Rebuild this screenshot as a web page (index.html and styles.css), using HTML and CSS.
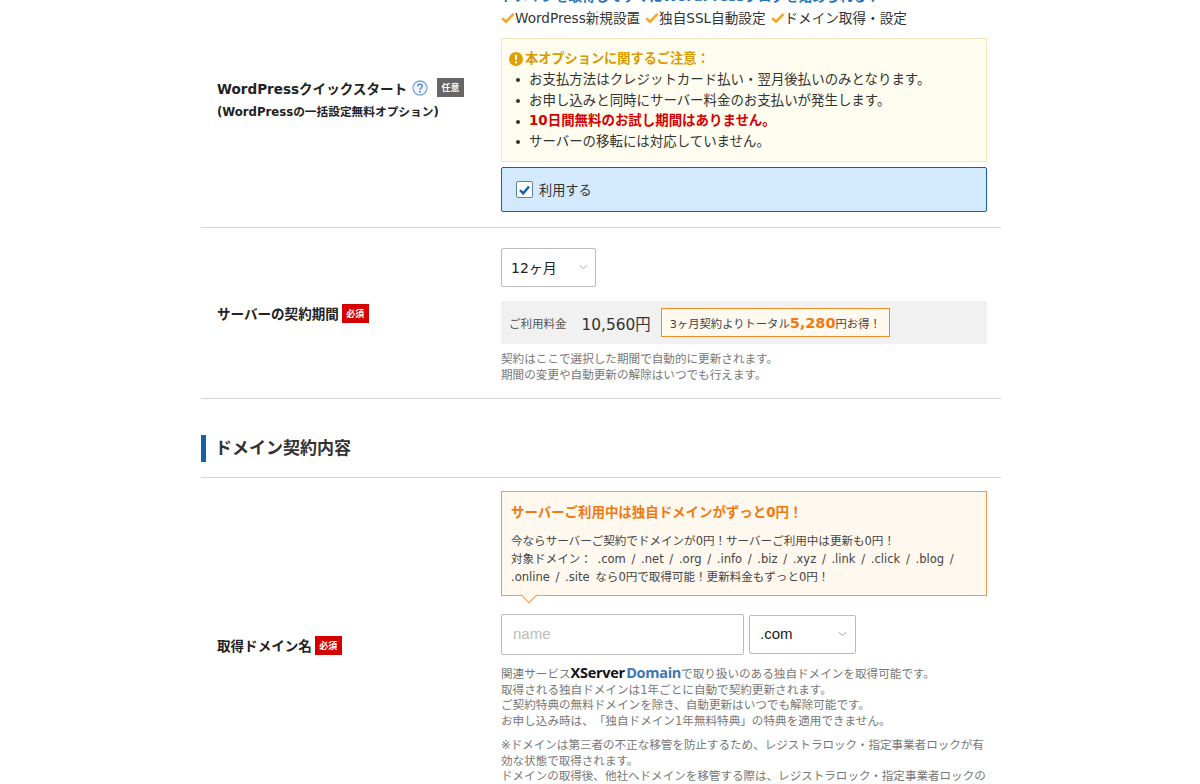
FILE: index.html
```html
<!DOCTYPE html>
<html lang="ja">
<head>
<meta charset="utf-8">
<title>お申し込み</title>
<link rel="stylesheet" href="styles.css">
</head>
<body>
<main class="form">
  <section class="row row-wp">
    <div class="label">
      <div class="label-line">
        <span>WordPressクイックスタート</span>
        <svg class="help" viewBox="0 0 16 16" width="16" height="16"><circle cx="8" cy="8" r="7" fill="#eef4fb" stroke="#7fa6d3" stroke-width="1.3"/><path d="M5.7 6.2C5.8 4.9 6.8 4.2 8 4.2c1.3 0 2.3.8 2.3 1.9 0 1.9-2.3 1.8-2.3 3.6" fill="none" stroke="#4f86c6" stroke-width="1.4"/><circle cx="8" cy="11.8" r=".95" fill="#4f86c6"/></svg>
        <span class="badge badge-opt">任意</span>
      </div>
      <div class="label-sub">(WordPressの一括設定無料オプション)</div>
    </div>
    <div class="content">
      <p class="lead">ドメインを取得してすぐにWordPressブログを始められる！</p>
      <ul class="checks">
        <li><svg class="tick" viewBox="0 0 14 12" width="14" height="12"><path d="M1.2 6.2 5 9.6 12.6 1.8" fill="none" stroke="#f5a623" stroke-width="2.6"/></svg>WordPress新規設置</li>
        <li><svg class="tick" viewBox="0 0 14 12" width="14" height="12"><path d="M1.2 6.2 5 9.6 12.6 1.8" fill="none" stroke="#f5a623" stroke-width="2.6"/></svg>独自SSL自動設定</li>
        <li><svg class="tick" viewBox="0 0 14 12" width="14" height="12"><path d="M1.2 6.2 5 9.6 12.6 1.8" fill="none" stroke="#f5a623" stroke-width="2.6"/></svg>ドメイン取得・設定</li>
      </ul>
      <div class="notice">
        <h4 class="notice-title"><svg viewBox="0 0 14 14" width="14" height="14"><circle cx="7" cy="7" r="7" fill="#e0a100"/><path d="M7 2.8v5" stroke="#fff" stroke-width="2"/><circle cx="7" cy="10.4" r="1.15" fill="#fff"/></svg>本オプションに関するご注意：</h4>
        <ul class="notice-list">
          <li>お支払方法はクレジットカード払い・翌月後払いのみとなります。</li>
          <li>お申し込みと同時にサーバー料金のお支払いが発生します。</li>
          <li class="alert">10日間無料のお試し期間はありません。</li>
          <li>サーバーの移転には対応していません。</li>
        </ul>
      </div>
      <label class="use">
        <span class="checkbox"><svg viewBox="0 0 16 16" width="16" height="16"><path d="M3.2 8.2 6.6 11.6 12.8 4.2" fill="none" stroke="#1560b0" stroke-width="2.6"/></svg></span>
        利用する
      </label>
    </div>
  </section>

  <section class="row row-term">
    <div class="label">
      <div class="label-line"><span>サーバーの契約期間</span><span class="badge badge-req">必須</span></div>
    </div>
    <div class="content">
      <div class="select select-term"><span>12ヶ月</span><svg class="chev" viewBox="0 0 10 6" width="9" height="6"><path d="M1 1l4 4 4-4" fill="none" stroke="#999" stroke-width="1"/></svg></div>
      <div class="price">
        <span class="price-label">ご利用料金</span>
        <span class="price-value">10,560円</span>
        <span class="save">3ヶ月契約よりトータル<b>5,280</b>円お得！</span>
      </div>
      <p class="note">契約はここで選択した期間で自動的に更新されます。<br>期間の変更や自動更新の解除はいつでも行えます。</p>
    </div>
  </section>

  <h2 class="section-title"><span>ドメイン契約内容</span></h2>

  <section class="row row-domain">
    <div class="label">
      <div class="label-line"><span>取得ドメイン名</span><span class="badge badge-req">必須</span></div>
    </div>
    <div class="content">
      <div class="bubble">
        <h4 class="bubble-title">サーバーご利用中は独自ドメインがずっと0円！</h4>
        <p class="bubble-text">今ならサーバーご契約でドメインが0円！サーバーご利用中は更新も0円！<br>対象ドメイン： .com / .net / .org / .info / .biz / .xyz / .link / .click / .blog /<br>.online / .site なら0円で取得可能！更新料金もずっと0円！</p>
      </div>
      <div class="domain-inputs">
        <input class="name-input" type="text" placeholder="name">
        <div class="select select-tld"><span>.com</span><svg class="chev" viewBox="0 0 10 6" width="9" height="6"><path d="M1 1l4 4 4-4" fill="none" stroke="#999" stroke-width="1"/></svg></div>
      </div>
      <p class="note">関連サービス<span class="logo"><span class="logo-x">XServer</span> <span class="logo-d">Domain</span></span>で取り扱いのある独自ドメインを取得可能です。<br>取得される独自ドメインは1年ごとに自動で契約更新されます。<br>ご契約特典の無料ドメインを除き、自動更新はいつでも解除可能です。<br>お申し込み時は、「独自ドメイン1年無料特典」の特典を適用できません。</p>
      <p class="note note-gap">※ドメインは第三者の不正な移管を防止するため、レジストラロック・指定事業者ロックが有効な状態で取得されます。<br>ドメインの取得後、他社へドメインを移管する際は、レジストラロック・指定事業者ロックの解除が必要となります。</p>
    </div>
  </section>
</main>
</body>
</html>
```
FILE: styles.css
```css
* { box-sizing: border-box; }
html, body { margin: 0; height: 784px; overflow: hidden; background: #fff; }
body {
  font-family: "DejaVu Sans", "Noto Sans CJK JP", sans-serif;
  color: #333;
  font-size: 13px;
  text-spacing-trim: space-all;
}
p, ul, h2, h4 { margin: 0; padding: 0; }
ul { list-style: none; }

.form { width: 800px; margin: -27px 0 0 201px; }

.row {
  display: grid;
  grid-template-columns: 300px 486px;
  align-items: center;
  border-bottom: 1px solid #d5d5d5;
}
.row .content { align-self: start; }
.row-wp { height: 255px; }
.row-wp .label { padding-bottom: 4px; }
.row-wp .content { padding-top: 13px; }
.row-term { height: 171px; }
.row-term .content { padding-top: 20px; }
.row-domain { height: 334px; border-bottom: 0; }
.row-domain .content { padding-top: 13px; }

.label { padding-left: 16px; }
.label-line {
  display: flex;
  align-items: center;
  font-size: 13.55px;
  font-weight: 700;
  color: #222;
}
.label-sub { margin-top: 4px; font-size: 11.7px; font-weight: 700; color: #222; }
.help { margin-left: 5px; }
.badge {
  display: inline-flex;
  align-items: center;
  justify-content: center;
  width: 27px;
  height: 19px;
  font-size: 9px;
  font-weight: 700;
  color: #fff;
}
.badge-opt { background: #666; margin-left: 9px; }
.badge-req { background: #d40000; margin-left: 3px; }

.lead { font-size: 13.5px; font-weight: 700; color: #2a74b8; line-height: 20px; white-space: nowrap; }
.checks { display: flex; gap: 5px; margin-top: 2px; line-height: 20px; font-size: 13.6px; color: #333; }
.checks li { display: flex; align-items: center; white-space: nowrap; }

.notice {
  margin-top: 10px;
  height: 124px;
  padding: 10px 7px 0;
  background: #fffdf0;
  border: 1px solid #f3e7bd;
}
.notice-title {
  display: flex;
  align-items: center;
  gap: 2px;
  font-size: 13.2px;
  font-weight: 700;
  color: #d99a00;
  line-height: 20px;
}
.notice-list { margin-top: 1px; padding-left: 7px; }
.notice-list li {
  display: flex;
  align-items: center;
  font-size: 13.45px;
  line-height: 20.7px;
  color: #333;
}
.notice-list li::before {
  content: "";
  flex: none;
  width: 4px;
  height: 4px;
  margin-right: 9px;
  border-radius: 50%;
  background: #333;
}
.notice-list .alert { font-weight: 700; color: #d40000; }

.use {
  display: flex;
  align-items: center;
  gap: 6px;
  height: 45px;
  margin-top: 5px;
  padding-left: 14px;
  background: #d3e9fd;
  border: 1px solid #1b5f9e;
  border-radius: 2px;
  font-size: 13.2px;
}
.checkbox {
  display: flex;
  width: 17px;
  height: 17px;
  background: #fff;
  border: 1px solid #5f7f9f;
  border-radius: 2px;
  align-items: center;
  justify-content: center;
}

.select {
  display: flex;
  align-items: center;
  justify-content: space-between;
  background: #fff;
  border: 1px solid #bbb;
  border-radius: 2px;
  color: #222;
}
.select-term { width: 95px; height: 39px; padding: 0 7px 1px 9px; font-size: 14px; }
.price {
  display: flex;
  align-items: center;
  height: 43px;
  margin-top: 14px;
  padding-left: 8px;
  background: #f1f1f1;
}
.price-label { font-size: 11.5px; color: #555; }
.price-value { margin-left: 15px; font-size: 15.4px; color: #333; }
.save {
  display: flex;
  align-items: baseline;
  margin-left: 10px;
  padding: 6px 8px 5px;
  background: #fff9f0;
  border: 1px solid #f08a24;
  font-size: 11.3px;
  color: #444;
}
.save b { font-size: 14.5px; color: #f07a12; }
.note { margin-top: 7px; font-size: 11.6px; line-height: 15.5px; color: #777; }
.row-term .note { margin-top: 8px; }

.section-title {
  display: flex;
  align-items: center;
  height: 79px;
  padding-top: 20px;
  border-bottom: 1px solid #d5d5d5;
  font-size: 17px;
  font-weight: 700;
  color: #333;
}
.section-title span { border-left: 5px solid #1560a8; padding-left: 9px; line-height: 27px; }

.bubble {
  position: relative;
  height: 105px;
  padding: 12px 9px 0;
  background: #fff8ef;
  border: 1px solid #f09a4a;
}
.bubble::after {
  content: "";
  position: absolute;
  left: 21px;
  bottom: -6px;
  width: 11px;
  height: 11px;
  background: #fff8ef;
  border-right: 1px solid #f09a4a;
  border-bottom: 1px solid #f09a4a;
  transform: rotate(45deg);
}
.bubble-title { font-size: 13.45px; font-weight: 700; color: #f07a12; line-height: 18px; }
.bubble-text { margin-top: 10px; font-size: 11.55px; line-height: 18px; color: #444; word-spacing: 2px; }

.domain-inputs { display: flex; align-items: center; gap: 5px; margin-top: 18px; }
.name-input {
  width: 243px;
  height: 41px;
  padding: 0 11px 2px;
  border: 1px solid #bbb;
  border-radius: 2px;
  outline: 0;
  font-family: "Liberation Sans", sans-serif;
  font-size: 15px;
}
.name-input::placeholder { color: #bbb; opacity: 1; }
.select-tld { width: 107px; height: 39px; padding: 0 8px 2px 10px; font-family: "Liberation Sans", sans-serif; font-size: 15px; }

.domain-inputs + .note { margin-top: 10px; }
.logo { font-family: "Open Sans", sans-serif; font-size: 14.5px; font-weight: 700; letter-spacing: -.3px; word-spacing: -2px; }
.logo-x { color: #111; }
.logo-d { color: #3a78b8; }
.note-gap { margin-top: 9px; font-size: 11.55px; }
```
